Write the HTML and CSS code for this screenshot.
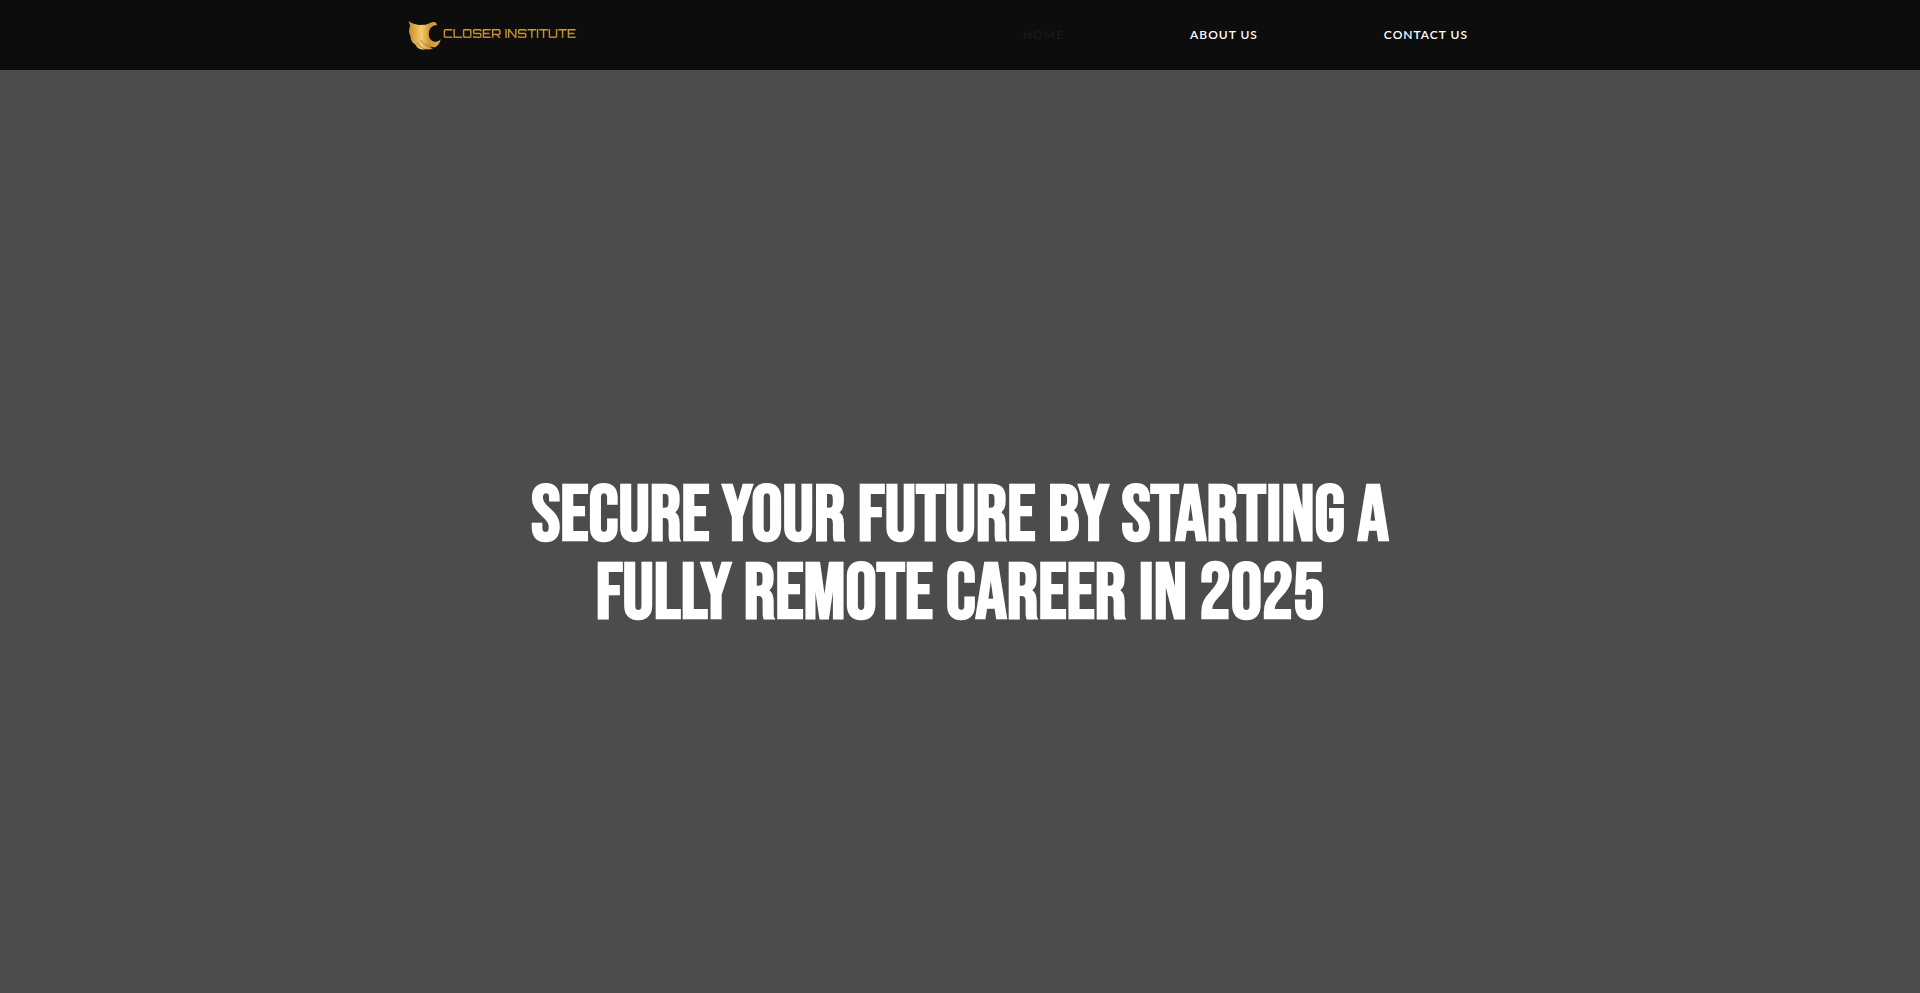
FILE: index.html
```html
<!DOCTYPE html>
<html lang="en">
<head>
    <meta charset="UTF-8">
    <meta name="viewport" content="width=device-width, initial-scale=1.0">
    <title>Closer Institute</title>
    <link rel="stylesheet" href="styles.css">
</head>
<body>
    <header class="header">
        <div class="header-inner">
            <a href="#" class="logo">
                <svg class="logo-mark" viewBox="0 0 99 87" aria-hidden="true">
                    <defs>
                        <linearGradient id="gold" x1="0" y1="0" x2="1" y2="0">
                            <stop offset="0" stop-color="#c98b2b"/>
                            <stop offset="0.4" stop-color="#f2cc70"/>
                            <stop offset="0.65" stop-color="#d09536"/>
                            <stop offset="1" stop-color="#e0ac4c"/>
                        </linearGradient>
                    </defs>
                    <path fill="url(#gold)" d="M2 0 C8 5 14 8 20 9 L33 12 L52 11 C62 9 70 3 79 3 C84 4 87 8 87 13 C76 11 66 19 63 32 C60 47 67 60 80 62 C89 63 94 60 98 54 C97 65 90 74 82 79 C74 79 69 78 64 75 C68 80 71 81 75 82 C66 87 55 87 45 82 C48 85 50 86 53 87 C38 87 27 82 23 73 L27 74 C15 68 8 58 7 47 L10 50 C3 41 2 30 4 22 C6 17 7 14 5 10 Z"/>
                    <path fill="none" stroke="#8a5d1e" stroke-width="2" d="M38 57 C44 68 54 74 64 75 M28 64 C33 74 39 79 45 82"/>
                </svg>
                <span class="logo-text">CLOSER INSTITUTE</span>
            </a>
            <nav class="nav">
                <a href="#" class="nav-link active">Home</a>
                <a href="#" class="nav-link">About Us</a>
                <a href="#" class="nav-link">Contact Us</a>
            </nav>
        </div>
    </header>

    <main class="hero">
        <h1 class="hero-title">Secure your future by starting a fully remote career in 2025</h1>
    </main>
</body>
</html>
```
FILE: styles.css
```css
* {
    box-sizing: border-box;
}
body {
    margin: 0;
    min-height: 100vh;
    display: flex;
    flex-direction: column;
    background: #4c4c4c;
    font-family: Lato, "Open Sans", sans-serif;
}
.header {
    background: #0d0d0d;
}
.header-inner {
    max-width: 1144px;
    height: 70px;
    margin: 0 auto;
    padding: 0 64px 0 20px;
    display: flex;
    justify-content: space-between;
    align-items: center;
}
.logo {
    display: flex;
    align-items: center;
    gap: 2px;
    text-decoration: none;
}
.logo-mark {
    width: 33px;
    height: 29px;
}
.logo-text {
    font-family: Orbitron, "DejaVu Sans", sans-serif;
    font-size: 12px;
    line-height: 16px;
    font-weight: 600;
    padding-bottom: 2px;
    background: linear-gradient(#dda52c, #a87420);
    -webkit-background-clip: text;
    background-clip: text;
    color: transparent;
}
.nav {
    display: flex;
    gap: 126px;
}
.nav-link {
    color: #fff;
    font-size: 12px;
    line-height: 20px;
    font-weight: 600;
    letter-spacing: 1px;
    text-transform: uppercase;
    text-decoration: none;
}
.nav-link.active {
    color: #191919;
}
.hero {
    flex: 1;
    display: flex;
    justify-content: center;
    align-items: center;
    padding: 68px 20px 20px;
}
.hero-title {
    max-width: 940px;
    margin: 0;
    color: #fff;
    font-family: "Bebas Neue", "Liberation Sans Narrow", "DejaVu Sans Condensed", sans-serif;
    font-size: 78px;
    line-height: 78px;
    font-weight: 700;
    text-align: center;
    text-transform: uppercase;
}
```
